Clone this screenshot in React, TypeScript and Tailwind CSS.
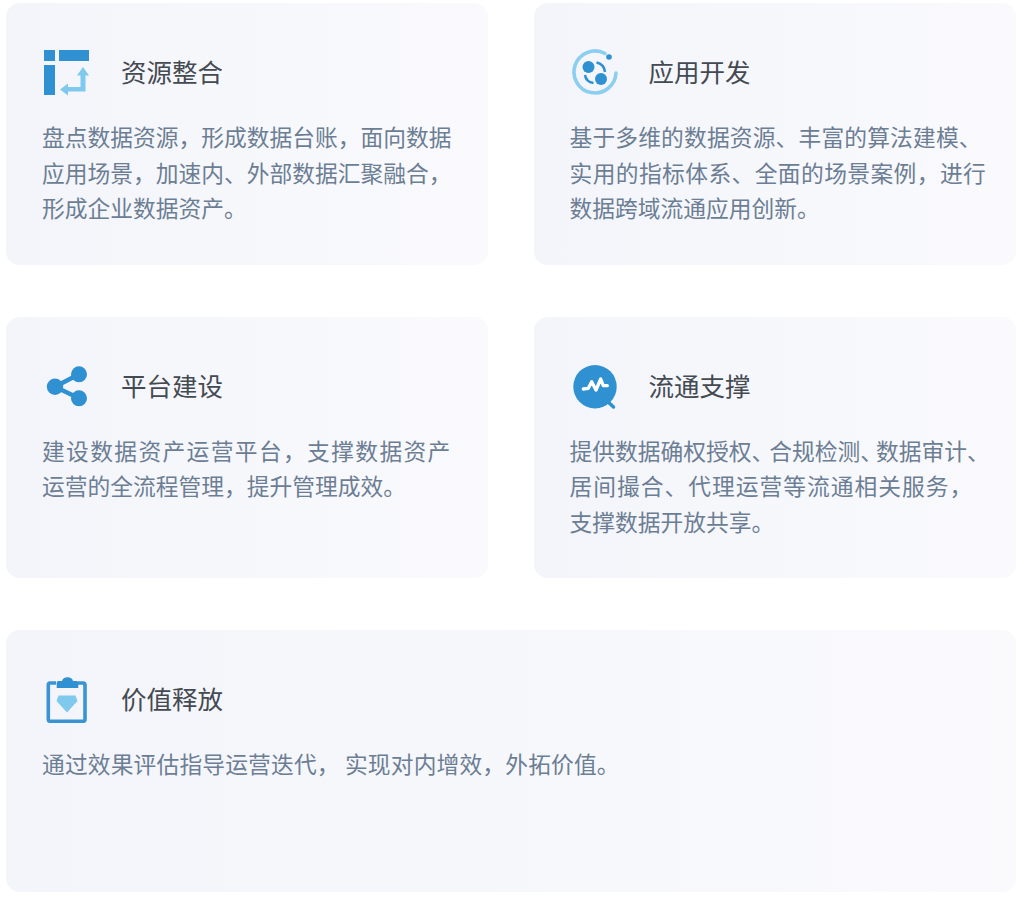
import type { ReactNode } from "react";

const F = "font-['Noto_Sans_CJK_SC','Noto_Sans',sans-serif]";
const BLUE = "#2f90d2";
const LIGHT = "#7fc9ee";

function Svg({ children }: { children: ReactNode }) {
  return (
    <svg width="48" height="50" viewBox="0 0 48 50">
      {children}
    </svg>
  );
}

function I1() {
  return (
    <Svg>
      <rect x="2" y="4" width="11" height="11" fill={BLUE} />
      <rect x="17" y="4" width="30" height="11" fill={BLUE} />
      <rect x="2" y="19" width="11" height="30" fill={BLUE} />
      <path d="M41 21 L47 29.5 H43.5 V45.5 H26 V49.5 L18 43.5 L26 37.5 V41 H38.5 V29.5 H35 Z" fill={LIGHT} />
    </Svg>
  );
}
function I2() {
  return (
    <Svg>
      <path d="M35 7.5 A21 21 0 1 0 46 27" fill="none" stroke="#8bcff0" strokeWidth="3.6" strokeLinecap="round" />
      <circle cx="39" cy="11" r="2.8" fill={BLUE} />
      <circle cx="18.5" cy="21" r="6" fill={BLUE} />
      <circle cx="31" cy="33" r="6" fill={BLUE} />
      <path d="M26.5 16.5 Q34 18 35 26" fill="none" stroke={BLUE} strokeWidth="2.5" />
      <path d="M15 29 Q16 36 23.5 37" fill="none" stroke={BLUE} strokeWidth="2.5" />
    </Svg>
  );
}
function I3() {
  return (
    <Svg>
      <path d="M37 14.3 L13 26.7 L37 38.3" fill="none" stroke={BLUE} strokeWidth="4.5" />
      <circle cx="37" cy="14.3" r="8" fill={BLUE} />
      <circle cx="13" cy="26.7" r="8.2" fill={BLUE} />
      <circle cx="37" cy="38.3" r="8" fill={BLUE} />
    </Svg>
  );
}
function I4() {
  return (
    <Svg>
      <path d="M36 40 L43.5 47" stroke={BLUE} strokeWidth="3.5" strokeLinecap="round" />
      <circle cx="25" cy="26.7" r="21.7" fill={BLUE} />
      <path d="M13.3 29 L18.3 28.3 L21.7 21.7 L26 30 L30.7 19 L33.3 25.7 L37.3 25.7" fill="none" stroke="#fff" strokeWidth="3.3" strokeLinejoin="round" strokeLinecap="round" />
    </Svg>
  );
}
function I5() {
  return (
    <Svg>
      <path d="M14 10 H8 Q6.3 10 6.3 12 V46.5 Q6.3 48.3 8 48.3 H41 Q43 48.3 43 46.5 V12 Q43 10 41 10 H36" fill="none" stroke="#3a93d3" strokeWidth="3.6" />
      <path d="M14.7 15 V9.5 Q14.7 8 16.5 8 H20 Q21 4.3 25.5 4.3 Q30 4.3 31 8 H34.5 Q36.3 8 36.3 9.5 V15 Z" fill={BLUE} />
      <path d="M16.5 22.5 H33.5 L35.5 28 L25 39.5 L14.5 28 Z" fill={LIGHT} />
    </Svg>
  );
}

function Card({ icon, title, lines, wide }: { icon: ReactNode; title: string; lines: ReactNode[]; wide?: boolean }) {
  return (
    <div className={`h-[261.67px] rounded-[14px] bg-gradient-to-r from-[#f3f5fa] to-[#fafafd] pl-9 pt-[43px] ${wide ? "col-span-2" : ""}`}>
      <div className="flex h-[50px] items-center gap-[31px]">
        <div className="h-[50px] w-[48px] shrink-0">{icon}</div>
        <div className="text-[25.5px] leading-[36px] text-[#444a52]">{title}</div>
      </div>
      <div className="mt-[23px] text-[22.75px] leading-[35.6px] text-[#6c7e94]">
        {lines.map((l, i) => (
          <div key={i} className="whitespace-nowrap">{l}</div>
        ))}
      </div>
    </div>
  );
}

export default function App() {
  return (
    <div className={`h-[898px] w-[1024px] overflow-hidden bg-white pl-[6px] pt-[3px] ${F}`}>
      <div className="grid w-[1010px] grid-cols-[482px_482.5px] gap-x-[45.5px] gap-y-[52px]">
        <Card
          icon={<I1 />}
          title="资源整合"
          lines={["盘点数据资源，形成数据台账，面向数据", "应用场景，加速内、外部数据汇聚融合，", "形成企业数据资产。"]}
        />
        <Card
          icon={<I2 />}
          title="应用开发"
          lines={[
            <span className="tracking-[0.15px]">基于多维的数据资源、丰富的算法建模、</span>,
            <span className="tracking-[0.4px]">实用的指标体系、全面的场景案例，进行</span>,
            "数据跨域流通应用创新。",
          ]}
        />
        <Card
          icon={<I3 />}
          title="平台建设"
          lines={[<span className="tracking-[1.35px]">建设数据资产运营平台，支撑数据资产</span>, "运营的全流程管理，提升管理成效。"]}
        />
        <Card
          icon={<I4 />}
          title="流通支撑"
          lines={[
            <>
              提供数据确权授权<span className="tracking-[-5px]">、</span>合规检测<span className="tracking-[-7px]">、</span>数据审计、
            </>,
            <span className="tracking-[1px]">居间撮合、代理运营等流通相关服务，</span>,
            "支撑数据开放共享。",
          ]}
        />
        <Card
          wide
          icon={<I5 />}
          title="价值释放"
          lines={[<span className="tracking-[0.15px]">通过效果评估指导运营迭代， 实现对内增效，外拓价值。</span>]}
        />
      </div>
    </div>
  );
}
